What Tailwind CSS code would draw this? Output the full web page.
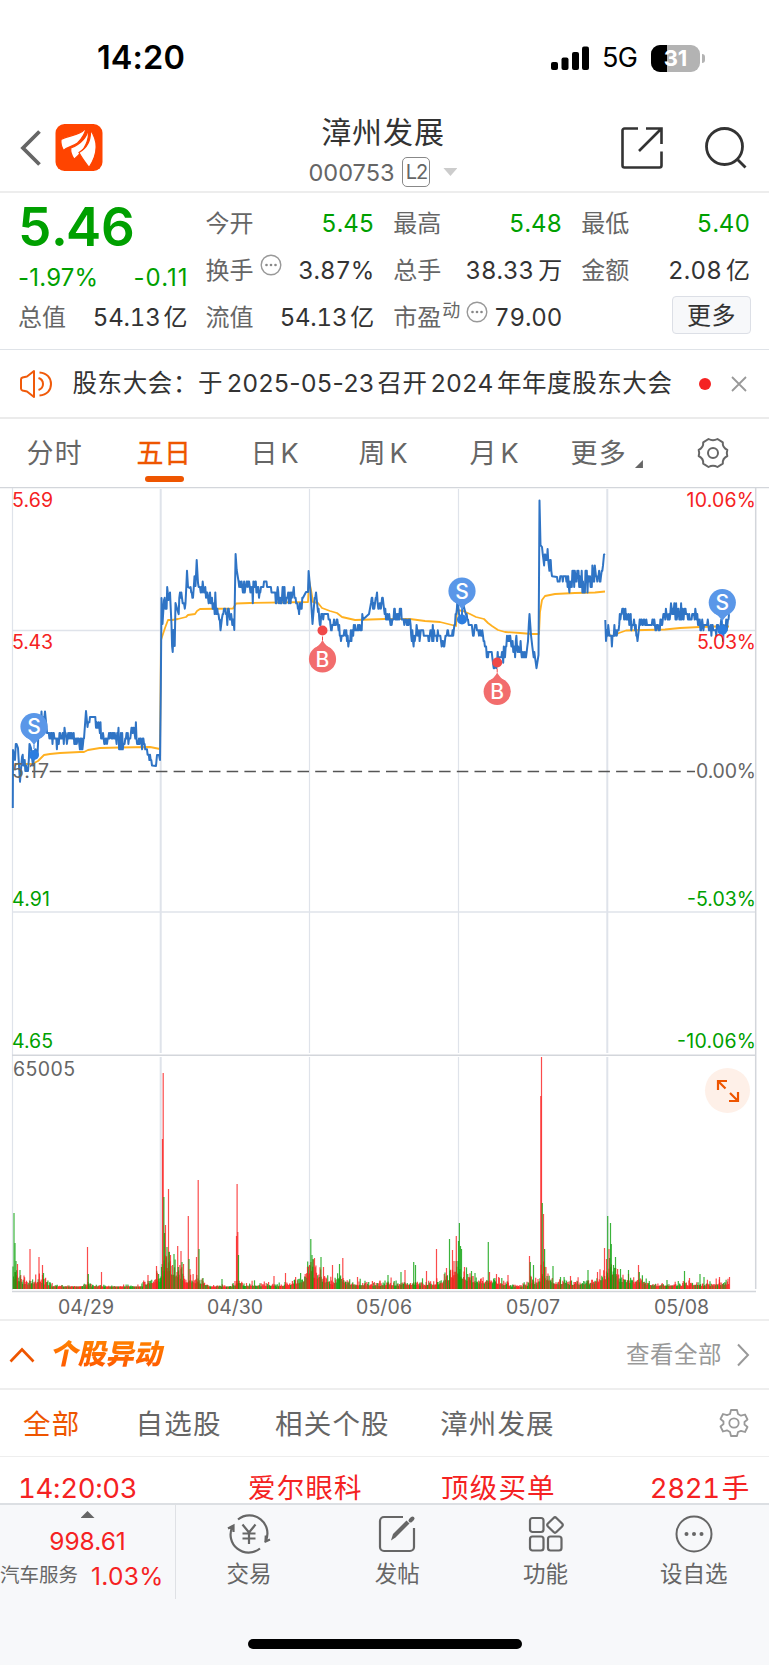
<!DOCTYPE html>
<html lang="zh-CN">
  <head>
    <meta charset="UTF-8" />
    <meta name="viewport" content="width=device-width, initial-scale=1.0" />
    <title>漳州发展 000753</title>
    <script src="https://cdn.jsdelivr.net/npm/@tailwindcss/browser@4"></script>
  </head>
  <body class="bg-white">
    <div class="relative w-[769px] h-[1665px] overflow-hidden bg-white font-['Inter','Noto_Sans_CJK_SC',sans-serif] text-[#333] whitespace-nowrap">
      <!-- Status bar -->
      <div class="h-[102px] pt-[14px] pl-[97px] pr-[64px] flex items-center justify-between text-black">
        <div class="text-[32.500px] font-semibold tracking-[0.1px]">14:20</div>
        <div class="flex items-center">
          <svg class="w-[38px] h-[26px]" viewBox="0 0 38 26">
            <rect x="0" y="17" width="7" height="8" rx="2" />
            <rect x="10.500" y="12.500" width="7" height="12.500" rx="2" />
            <rect x="21" y="7" width="7" height="18" rx="2" />
            <rect x="31" y="1.500" width="7" height="23.500" rx="2" />
          </svg>
          <div class="ml-[13px] w-[36px] text-[27px] tracking-[-0.7px]">5G</div>
          <div class="relative ml-[13px] w-[49px] h-[27px] rounded-[9px] overflow-hidden bg-[#b3b3b3] flex items-center justify-center">
            <div class="absolute left-0 top-0 w-[16px] h-full bg-black"></div>
            <div class="relative text-[22px] font-bold text-white leading-none">31</div>
          </div>
          <div class="ml-[2px] w-[3px] h-[9px] rounded-r-full bg-[#b3b3b3]"></div>
        </div>
      </div>

      <!-- Header -->
      <div class="h-[91px] border-b-2 border-[#ededed] flex justify-between pl-[20px] pr-[21px]">
        <div class="flex w-[280px] pt-[22px]">
          <svg class="w-[21px] h-[47px]" viewBox="0 0 21 47" fill="none" stroke="#666" stroke-width="3.800">
            <path d="M19.500 7.500 3 24 19.500 40.500" />
          </svg>
          <svg class="ml-[14px] w-[48px] h-[47px]" viewBox="0 0 48 47">
            <rect x=".500" width="47" height="47" rx="9" fill="#ff4400" />
            <g fill="#fff" stroke="#ff4400" stroke-width="1.200">
              <path d="M31 3.800C24 12.500 15 10.500 6 15.500c-.5 4 .5 7.500 2.500 11 4-4 10-4 14-7.500 4-4 7.500-8.500 8.500-15.200z" />
              <path d="M33.400 4.300C32 14 25.500 20 15.800 24c-.5 4 .7 7.500 3.400 11.300C28 28 35 18 33.400 4.300z" />
              <path d="M35.500 6C36 17 32 24 24 28.500c2.500 5 6 9.500 10 15C43 30 43.500 17.500 35.500 6z" />
            </g>
          </svg>
        </div>
        <div class="flex flex-col items-center pt-[10px]">
          <div class="h-[41px] leading-[41px] text-[30px] tracking-[0.9px]">漳州发展</div>
          <div class="h-[40px] flex items-center text-[#666]">
            <span class="mt-[1px] text-[23.500px]">000753</span>
            <span class="ml-[8px] w-[28px] h-[30px] rounded-[5px] border border-[#888] text-[20px] leading-[28px] text-center tracking-[-1px]">L2</span>
            <span class="ml-[13px] w-[14px] h-[8px] bg-[#ccc] [clip-path:polygon(0_0,100%_0,50%_100%)]"></span>
          </div>
        </div>
        <div class="flex justify-end w-[282px] pt-[24px]">
          <svg class="w-[44px] h-[44px]" viewBox="0 0 44 44" fill="none" stroke="#333" stroke-width="2.600">
            <path d="M18 2.500H4.500a2 2 0 0 0-2 2v35a2 2 0 0 0 2 2h35a2 2 0 0 0 2-2V25.500M26 2.500h15.500V18M41.500 2.500 19 25" />
          </svg>
          <svg class="ml-[40px] w-[44px] h-[44px]" viewBox="0 0 44 44" fill="none" stroke="#333" stroke-width="2.800">
            <circle cx="20.500" cy="20.500" r="18" />
            <path d="m33 33 8.500 8.500" />
          </svg>
        </div>
      </div>

      <!-- Quote -->
      <div class="h-[157px] border-b border-[#dfe3e8] pl-[18px] pr-[19px] flex gap-[18px] text-[24px] tabular-nums">
        <div class="w-[169.500px]">
          <div class="h-[66px] leading-[68px] text-[53px] font-semibold text-[#00a000]">5.46</div>
          <div class="h-[35px] leading-[37px] flex justify-between text-[#00a000] proportional-nums tracking-[0.2px]"><span>-1.97%</span><span class="tracking-[1px] -mr-[1px]">-0.11</span></div>
          <div class="h-[47px] leading-[48px] flex justify-between"><span class="text-[#666]">总值</span><span><span class="tracking-[-0.2px]">54.13</span><span class="ml-[3px]">亿</span></span></div>
        </div>
        <div class="flex-1 pt-[7px] grid grid-cols-3 gap-x-[19px] auto-rows-[47px] leading-[48px]">
          <div class="flex justify-between"><span class="text-[#666]">今开</span><span class="text-[#00a000]">5.45</span></div>
          <div class="flex justify-between"><span class="text-[#666]">最高</span><span class="text-[#00a000]">5.48</span></div>
          <div class="flex justify-between"><span class="text-[#666]">最低</span><span class="text-[#00a000]">5.40</span></div>
          <div class="flex justify-between">
            <span class="text-[#666] flex">换手
              <svg class="ml-[6px] mt-[7px] w-[22px] h-[22px]" viewBox="0 0 22 22" fill="#888">
                <circle cx="11" cy="11" r="9.800" fill="none" stroke="#999" stroke-width="1.400" />
                <circle cx="6.500" cy="11" r="1.300" /><circle cx="11" cy="11" r="1.300" /><circle cx="15.500" cy="11" r="1.300" />
              </svg>
            </span>
            <span class="tracking-[-0.1px]">3.87%</span>
          </div>
          <div class="flex justify-between"><span class="text-[#666]">总手</span><span>38.33<span class="ml-[4px]">万</span></span></div>
          <div class="flex justify-between"><span class="text-[#666]">金额</span><span><span class="tracking-[0.2px]">2.08</span><span class="ml-[4px]">亿</span></span></div>
          <div class="flex justify-between"><span class="text-[#666]">流值</span><span><span class="tracking-[-0.2px]">54.13</span><span class="ml-[3px]">亿</span></span></div>
          <div class="flex justify-between">
            <span class="text-[#666] flex">市盈<span class="text-[18px] leading-[34px] ml-[1px]">动</span>
              <svg class="ml-[6px] mt-[7px] w-[22px] h-[22px]" viewBox="0 0 22 22" fill="#888">
                <circle cx="11" cy="11" r="9.800" fill="none" stroke="#999" stroke-width="1.400" />
                <circle cx="6.500" cy="11" r="1.300" /><circle cx="11" cy="11" r="1.300" /><circle cx="15.500" cy="11" r="1.300" />
              </svg>
            </span>
            <span class="tracking-[-0.1px]">79.00</span>
          </div>
          <div class="flex justify-end">
            <div class="mt-[2px] -mr-[1px] w-[79px] h-[38px] rounded-[4px] border border-[#dcdfe6] bg-[#f7f8fa] text-center leading-[37px] tracking-[0.5px]">更多</div>
          </div>
        </div>
      </div>

      <!-- Notice -->
      <div class="h-[69px] border-b-2 border-[#ebebeb] flex items-center pl-[19px] pr-[21px]">
        <svg class="w-[34px] h-[30px]" viewBox="0 0 34 30" fill="none" stroke="#f05a0a" stroke-width="2">
          <path d="M2 10.500q0-1.500 1.500-2L8 7.500l7-5.500v26l-7-5.500-4.500-1q-1.500-.5-1.500-2z" stroke-linejoin="round" />
          <path d="M19.500 9q4.500 1.500 4.500 6t-4.500 6M20.500 3.500C28 4 32 9 32 15s-4 11-11.500 11.500" />
        </svg>
        <div class="ml-[19.500px] w-[614.500px] text-[24.500px] tracking-[0.6px]"><span>股东大会：于</span><span class="ml-[4px] tracking-[0.5px]">2025-05-23</span><span class="ml-[3px]">召开</span><span class="ml-[3px] tracking-[0.6px]">2024</span><span class="ml-[3px]">年年度股东大会</span></div>
        <div class="ml-[12px] w-[12px] h-[12px] rounded-full bg-[#f52222] shrink-0"></div>
        <svg class="ml-[20px] w-[16px] h-[16px] shrink-0" viewBox="0 0 16 16" stroke="#999" stroke-width="1.800">
          <path d="M1 1l14 14M15 1 1 15" />
        </svg>
      </div>

      <!-- Period tabs -->
      <div class="h-[68px] flex text-[27px] leading-[70px] text-[#666] pl-[26.500px]">
        <div class="w-[110px] tracking-[1.200px]">分时</div>
        <div class="relative w-[114px] text-[#ee5500] tracking-[0.5px] [-webkit-text-stroke:0.3px_#ee5500]">五日<div class="absolute left-[8.500px] bottom-[5px] w-[39px] h-[6px] rounded-full bg-[#ee5500]"></div></div>
        <div class="w-[108px]">日<span class="ml-[3px]">K</span></div>
        <div class="w-[111px]">周<span class="ml-[4px]">K</span></div>
        <div class="w-[101px]">月<span class="ml-[4px]">K</span></div>
        <div class="flex w-[126px] tracking-[1.200px]">更多<div class="ml-[8px] mt-[41px] w-[8px] h-[8px] bg-[#666] [clip-path:polygon(100%_0,100%_100%,0_100%)]"></div></div>
        <svg class="mt-[18px] w-[32px] h-[32px]" viewBox="0 0 32 32" fill="none" stroke="#666" stroke-width="2">
          <path d="M11.500 2q4.500 2.500 9 0l5.300 3.400q-.5 5 4.500 7.600-1 3 0 6-5 2.600-4.500 7.600L20.500 30q-4.500-2.500-9 0l-5.300-3.400q.5-5-4.500-7.600 1-3 0-6 5-2.600 4.500-7.600z" stroke-linejoin="round" />
          <circle cx="16" cy="16" r="5" />
        </svg>
      </div>

      <!-- Chart -->
      <div class="relative h-[834px] border-b-2 border-[#eee]">
        <svg class="block w-[769px] h-[832px]" viewBox="0 487 769 832" fill="none">
          <g stroke="#dfe3ea" stroke-width="1.200">
            <path d="M12.500 488V1290M309.500 489V1053M309.500 1057V1289M458.500 489V1053M458.500 1057V1289" />
            <path d="M160.700 489V1053M160.700 1057V1289M607.300 489V1053M607.300 1057V1289" stroke-width="2" />
            <path d="M12 630.500H756M12 912H756" stroke-width="1.600" />
            <path d="M0 487.500H769M12 1055.200H756M12 1291.500H756M755.700 488V1289" stroke="#d3d6db" stroke-width="1.500" />
          </g>
          <path d="M28 771.500H695" stroke="#555" stroke-width="1.300" stroke-dasharray="11.500 6.200" stroke-dashoffset="-4" />
          <g id="volume" stroke-width="1.200"></g>
          <path id="average" stroke="#ffb020" stroke-width="1.800" stroke-linejoin="round" />
          <path id="price" stroke="#2f74c5" stroke-width="2" stroke-linejoin="round" />
          <g id="markers" font-size="21" font-weight="500" text-anchor="middle" fill="#fff"></g>
          <g font-size="19.500">
            <g fill="#f52222">
              <text x="12" y="507" textLength="41">5.69</text>
              <text x="12" y="648.500" textLength="41">5.43</text>
              <text x="756" y="507" textLength="69.500" text-anchor="end">10.06%</text>
              <text x="756" y="648.500" textLength="59" text-anchor="end">5.03%</text>
            </g>
            <g fill="#666">
              <text x="12" y="777.500" textLength="37">5.17</text>
              <text x="756" y="777.500" textLength="60" text-anchor="end">0.00%</text>
              <text x="13" y="1076" textLength="62">65005</text>
              <text x="86" y="1313.500" textLength="56" text-anchor="middle">04/29</text>
              <text x="235" y="1313.500" textLength="56" text-anchor="middle">04/30</text>
              <text x="384" y="1313.500" textLength="56" text-anchor="middle">05/06</text>
              <text x="533" y="1313.500" textLength="54" text-anchor="middle">05/07</text>
              <text x="681.500" y="1313.500" textLength="55" text-anchor="middle">05/08</text>
            </g>
            <g fill="#00a000">
              <text x="12" y="906" textLength="38">4.91</text>
              <text x="12" y="1048" textLength="41">4.65</text>
              <text x="756" y="906" textLength="69" text-anchor="end">-5.03%</text>
              <text x="756" y="1048" textLength="79" text-anchor="end">-10.06%</text>
            </g>
          </g>
        </svg>
        <!-- expand button -->
        <div class="absolute left-[705px] top-[581px] w-[45px] h-[45px] rounded-full bg-[#fef0e8]">
          <svg class="w-[45px] h-[45px]" viewBox="0 0 45 45" fill="none" stroke="#ee5500" stroke-width="2.200">
            <path d="M13 22V13H22M13.500 13.500 20.500 20.500M33 24v9H24M32.500 32.500 25 25" />
          </svg>
        </div>
      </div>

      <!-- Unusual movements -->
      <div class="h-[69px] border-b-2 border-[#eee] flex items-center pl-[9px] pr-[19px]">
        <svg class="w-[26px] h-[16px]" viewBox="0 0 26 16" fill="none" stroke="#ee5500" stroke-width="2.600">
          <path d="M1.500 14.500 13 2.500 24.500 14.500" />
        </svg>
        <div class="ml-[17px] -mt-[2px] w-[116px] -skew-x-12 text-[28px] leading-[40px] font-black text-transparent bg-clip-text bg-gradient-to-b from-[#ff8a00] to-[#ff4c00]">个股异动</div>
        <div class="ml-auto mt-[1px] text-[23.500px] tracking-[0.5px] text-[#999]">查看全部</div>
        <svg class="ml-[14px] w-[14px] h-[24px]" viewBox="0 0 14 24" fill="none" stroke="#999" stroke-width="2">
          <path d="M2 1.500 12 12 2 22.500" />
        </svg>
      </div>
      <div class="h-[67px] border-b border-[#eee] flex items-center pl-[23px] pr-[20px] text-[27.500px] leading-[40px] tracking-[1.200px] text-[#666]">
        <div class="mt-[2px] w-[112.500px] text-[#ee5500]">全部</div>
        <div class="mt-[2px] w-[139.500px]">自选股</div>
        <div class="mt-[2px] w-[165px]">相关个股</div>
        <div class="mt-[2px]">漳州发展</div>
        <svg class="ml-auto w-[30px] h-[30px]" viewBox="0 0 30 30" fill="none" stroke="#999" stroke-width="1.800">
          <path d="M12 2h6l1 4 3 1.700 4-1.200 2.500 5-3 2.500v2.500l3 2.500-2.500 5-4-1.200L19 24l-1 4h-6l-1-4-3-1.700-4 1.200-2.500-5 3-2.500v-2.500l-3-2.500 2.500-5 4 1.200L11 6z" stroke-linejoin="round" />
          <circle cx="15" cy="15" r="4.700" />
        </svg>
      </div>
      <div class="h-[46px] flex pt-[17px] pl-[18px] pr-[20px] text-[27.500px] leading-[29px] text-[#f52222] tabular-nums">
        <div class="w-[230px] tracking-[-0.3px]">14:20:03</div>
        <div class="w-[193px] tracking-[1.200px]">爱尔眼科</div>
        <div class="tracking-[1.200px]">顶级买单</div>
        <div class="ml-auto tracking-[-0.3px]">2821<span class="ml-[2px]">手</span></div>
      </div>

      <!-- Bottom bar -->
      <div class="h-[162px] border-t-2 border-[#dcdfe3] bg-[#f7f8fa] text-[#666]">
        <div class="flex h-[94px]">
          <div class="w-[176px] border-r border-[#dfe1e5] flex flex-col items-center">
            <div class="mt-[6px] w-[14px] h-[7px] bg-[#666] [clip-path:polygon(50%_0,100%_100%,0_100%)]"></div>
            <div class="mt-[6px] h-[34px] leading-[35px] text-[24.500px] text-[#f52222]">998.61</div>
            <div class="w-full h-[36px] flex items-center"><span class="text-[19.500px]">汽车服务</span><span class="ml-[13px] text-[24.500px] text-[#f52222] tracking-[0.3px]">1.03%</span></div>
          </div>
          <div class="flex-1 -ml-[1px] mr-[1px] grid grid-cols-4 text-[22.500px] leading-[38px]">
            <div class="flex flex-col items-center pt-[8px]">
              <svg class="w-[44px] h-[42px]" viewBox="0 0 44 42" fill="none" stroke="#666" stroke-width="2.200">
                <path d="M11 6.500A18 18 0 0 1 38.500 28.500M38.500 28.500l.3-6M37.500 29l5.500-2.500M33 35.500A18 18 0 0 1 5.500 13.500M1 15.500 6.500 12.500V19M15.500 11.500 22 19.500 28.500 11.500M22 19.500V31M15.500 20.500h13M15.500 25.500h13" />
              </svg>
              <div>交易</div>
            </div>
            <div class="flex flex-col items-center pt-[8px]">
              <svg class="w-[44px] h-[42px]" viewBox="0 0 44 42" fill="none" stroke="#666" stroke-width="2.200">
                <path d="M28 4H9a4 4 0 0 0-4 4v26a4 4 0 0 0 4 4h26a4 4 0 0 0 4-4V15" />
                <path d="M16 27.500 18 21 31.500 7.500 34.500 10.500 20.500 24.500Z" fill="#666" stroke="none" />
                <path d="M35.500 7.500 37.500 5.500" stroke-width="4" stroke-linecap="round" />
              </svg>
              <div>发帖</div>
            </div>
            <div class="flex flex-col items-center pt-[8px]">
              <svg class="w-[44px] h-[42px]" viewBox="0 0 44 42" fill="none" stroke="#666" stroke-width="2.200">
                <rect x="6" y="5" width="13.500" height="14" rx="2.500" />
                <rect x="6" y="23.500" width="13.500" height="14" rx="2.500" />
                <rect x="24" y="23.500" width="13.500" height="14" rx="2.500" />
                <rect x="25" y="6" width="12" height="12" rx="2" transform="rotate(45 31 12)" />
              </svg>
              <div>功能</div>
            </div>
            <div class="flex flex-col items-center pt-[8px]">
              <svg class="w-[44px] h-[42px]" viewBox="0 0 44 42" fill="#666">
                <circle cx="22" cy="21" r="17.500" fill="none" stroke="#666" stroke-width="2" />
                <circle cx="14.500" cy="21" r="2" /><circle cx="22" cy="21" r="2" /><circle cx="29.500" cy="21" r="2" />
              </svg>
              <div>设自选</div>
            </div>
          </div>
        </div>
        <div class="mt-[40px] mx-auto w-[274px] h-[10px] rounded-full bg-black"></div>
      </div>
    </div>

    <script>
      // repeatable noise in 0..1
      let seed = 7;
      const rand = () => {
        seed = (seed * 16807) % 2147483647;
        return seed / 2147483647;
      };

      // [x, y, wobble] for each trading run
      const runs = [
        [
          [12.8,808,0],[13,750,0],[15,760,6],[16.500,744,0],[18,748,2],[20,782,0],[22,757,5],[26,768,6],[28,770,3],[29.500,745,0],[31,748,3],[33,765,0],[35,750,3],[37.500,757,2],[38.500,730,6],[41.500,712,0],[42.500,733,3],[45,710,0],[46.500,727,6],[50,733,5],[55,741,6],[62,737,6],[70,738,6],[78,739,6],[83,746,3],[84,738,0],[86,711,0],[87.500,727,3],[90,717,2],[94,718,5],[98,727,6],[103,734,4],[107,744,3],[111,734,3],[116,738,7],[124,742,5],[129,738,3],[134,730,6],[139,738,5],[144,743,5],[147,751,4],[150,757,3],[152,766,0],[156,766,0],[157,755,0],[159,755,0],[160,760,0],[160.800,690,0],
          [161.500,598,0],[162.500,624,0],[164,600,5],[166,605,7],[167.200,587,0],[168.500,600,5],[170,594,0],[171.500,625,5],[172.700,652,0],[173.500,630,0],[174.700,646,0],[175.500,603,0],[178,612,5],[180,594,5],[184,603,3],[185.500,604,3],[187,571,0],[188,587,0],[190,588,4],[193,598,5],[194.500,577,0],[195.500,586,0],[196.700,560,0],[198,583,3],[200,586,5],[204,592,6],[208,600,5],[212,597,7],[216,606,6],[218.500,612,3],[220.500,630,0],[222,618,4],[226,614,6],[230,619,3],[233.500,619,0],[234.300,630,0],[235.600,554,0],[236.700,570,0],[238,578,5],[241,589,4],[246,587,6],[251,589,7],[257,593,6],[261,588,4],[264,580,5],[269,587,3],[274,591,7],[282,596,8],[290,594,7],[295,597,3],[298.500,608,4],[301,608,2],[303,598,0],[306,592,0],[308,592,0],[308.600,571,0],
          [310.500,592,0],[312.500,624,0],[314,606,5],[316,594,0],[318,612,5],[320.500,624,3],[322,614,2],[328,615,3],[330.500,626,4],[334,621,4],[338,626,5],[341,640,4],[345,630,5],[349,643,5],[352,632,4],[355,626,3],[361,628,4],[363,618,0],[369,614,0],[371,603,3],[375,602,7],[379,607,6],[384,608,6],[388,617,6],[396,615,7],[403,621,3],[410,622,5],[413,642,4],[416,634,5],[422,633,4],[428,634,7],[434,631,4],[439,638,4],[443,643,5],[448,632,4],[452,636,4],[455,624,3],[457.500,600,0],
          [459,614,0],[461,622,4],[463,603,0],[466,615,6],[470,625,4],[473,636,4],[475,624,4],[479,635,4],[483,636,3],[485.500,648,4],[488,656,5],[491,654,7],[495,664,6],[499,658,3],[502,652,5],[505,656,2],[507,638,4],[509,637,6],[512,645,7],[517,647,6],[523,652,5],[526,657,3],[528,640,3],[529.500,614,0],[531,635,3],[533,650,4],[535,655,3],[536.500,668,0],[538.500,655,2],[539.500,501,0],
          [540.500,545,0],[542,547,6],[543.500,562,8],[547,560,8],[550,562,4],[552,576,0],[557,577,2],[559,584,6],[564,577,4],[567,575,6],[570,584,7],[576,579,8],[583,583,8],[590,578,8],[596,577,4],[601,576,2],[603,566,2],[604,554,0],[605,554,0],
        ],
        [
          [605.300,620,0],[606,641,0],[607,630,6],[610,636,6],[615,634,3],[618,628,4],[621,616,3],[623.500,608,7],[626,618,4],[630,621,6],[634,620,4],[637.500,640,0],[639,628,4],[643,625,5],[647,625,1],[653,622,4],[658,627,5],[661,620,4],[664,613,5],[669,615,6],[673,611,6],[678,609,8],[683,614,6],[688,619,2],[694,616,7],[698,623,4],[704,627,5],[709,630,4],[715,630,4],[720,630,6],[725,630,6],[728,622,2],[729,614,0],
        ],
      ];

      // one cent is 5.41px; wobbling stretches snap to whole cents
      const tick = (y) => 630.300 + Math.round((y - 630.300) / 5.410) * 5.410;
      const trace = (points) => {
        let d = `M${points[0][0]} ${points[0][1]}`;
        for (let i = 1; i < points.length; i++) {
          const [x0, y0, w] = points[i - 1];
          const [x1, y1] = points[i];
          const steps = w ? Math.max(1, Math.round((x1 - x0) / 0.62)) : 1;
          for (let s = 1; s < steps; s++) {
            const t = s / steps;
            const y = tick(y0 + (y1 - y0) * t + (rand() * 2 - 1) * w * 1.5);
            d += `L${(x0 + (x1 - x0) * t).toFixed(1)} ${y.toFixed(1)}`;
          }
          d += `L${x1} ${w ? tick(y1).toFixed(1) : y1}`;
        }
        return d;
      };
      document.getElementById("price").setAttribute("d", runs.map(trace).join(""));

      document.getElementById("average").setAttribute(
        "d",
        "M13 766L17 764 32 764 38 761 44 755 50 754 60 753 80 752 84 752 88 750 100 748 120 747.500 150 747 160 749L161 640 163 634 165 628 168 620 172 620 178 619 186 617 188 615 195 614 197 611 200 609 233 608.500 236 603.500 250 603 308 602L309 580 311 590 313 602 318 603 322 608 330 611 337 613 342 617 355 620 370 619.500 385 619 410 619 425 621 440 622 452 625 456 626 457 610 463 611 470 614 476 617 484 619 488 623 492 626 498 630 505 632 520 633 532 634 539 634L540 612 542 600 545 596 555 594 575 593 595 592.500 605 591.500" +
          "M606 634L613 636 619 633 626 630.500 645 630 665 629.500 680 628 700 627 715 626.500 729 626.500"
      );

      // typical bar height along the time axis
      const base = [
        [13,26],[17,22],[24,13],[32,12],[40,18],[46,11],[56,5],[80,4],[88,7],[92,6],[105,4],[140,5],[148,12],[158,19],[161,22],[166,48],[172,32],[178,28],[184,17],[190,18],[198,14],[204,12],[208,5],[230,4],[238,12],[244,8],[255,8],[280,7],[295,13],[304,20],[309,32],[314,30],[320,25],[324,16],[332,11],[340,24],[346,13],[354,10],[365,9],[380,8],[388,12],[398,8],[410,11],[420,10],[430,9],[440,13],[450,25],[458,35],[464,26],[470,20],[480,14],[495,17],[504,9],[518,5],[527,8],[532,14],[538,11],[544,34],[548,18],[556,13],[575,11],[595,14],[604,24],[612,34],[618,21],[630,17],[645,12],[656,8],[690,9],[710,8],[729,12],
      ];
      const R = "#fa1e1e";
      const G = "#0aa00a";
      // single tall bars: [x, height, colour]
      const spikes = [
        [14,76,G],[15,46,G],[16,28,G],[17.500,25,R],[20,19,G],[30,40,R],[39,32,R],[42.500,24,R],[43.500,16,G],[87.500,42,R],[88.300,15,G],[101.500,17,R],[148,14,R],[156.500,23,R],[161.500,22,G],[162.500,150,R],[163.200,216,R],[163.900,92,G],[164.600,56,G],[165.500,64,R],[167,42,G],[168.500,100,R],[169.200,37,G],[170.500,34,R],[174,35,G],[177.700,43,R],[178.300,22,G],[181,38,R],[182,27,G],[183.500,25,R],[188.300,73,R],[189,30,G],[190,20,R],[196.500,32,R],[198.200,109,R],[199,40,G],[203,11,G],[222,10,G],[236.500,53,R],[237.100,105,R],[237.800,57,R],[238.500,34,G],[274,13,R],[285.500,16,R],[307.500,22,R],[309.500,24,R],[310.800,50,G],[312,34,G],[313,30,G],[314.500,31,R],[321,32,G],[323.500,22,R],[332.500,24,R],[339.500,25,G],[342.800,31,R],[357.500,12,R],[388,14,G],[401,17,G],[405,19,R],[413.700,27,G],[415.500,24,G],[426.500,18,R],[436.500,40,R],[446.500,21,R],[449.500,50,G],[452.500,39,R],[454,28,R],[456.300,53,R],[458.500,48,G],[459.400,66,G],[460.500,43,G],[461.500,40,G],[464.500,22,R],[471.500,18,G],[475,16,G],[488.300,47,G],[489.500,17,R],[496.500,15,R],[508,14,R],[529.500,33,R],[530.300,27,G],[533.500,24,G],[540.800,193,R],[541.500,232,R],[542.300,86,G],[543.500,75,R],[544.600,40,G],[553,23,G],[560.500,12,G],[570.500,13,R],[588,19,G],[597.500,17,R],[604.500,41,R],[606.500,30,R],[607.700,73,G],[609,40,R],[610.500,66,G],[611.300,45,G],[613.500,24,G],[615.500,32,G],[620.500,20,G],[628.500,19,G],[638.500,24,R],[639.300,17,G],[667,9,G],[684.500,18,G],[689.500,11,R],[700,15,G],[704,12,G],[719.500,12,R],[729.500,12,R],
      ];
      const bars = [];
      for (let i = 1; i < base.length; i++) {
        const [x0, h0] = base[i - 1];
        const [x1, h1] = base[i];
        for (let x = x0; x < x1; x += 0.62) {
          const h = (h0 + ((h1 - h0) * (x - x0)) / (x1 - x0)) * (0.35 + 0.8 * rand() * rand());
          bars.push([x, Math.max(2.5, h), rand() > 0.42 ? R : G]);
        }
      }
      document.getElementById("volume").innerHTML = bars
        .concat(spikes)
        .map(([x, h, c]) => `<path d="M${x.toFixed(1)} 1289v-${h.toFixed(1)}" stroke="${c}" stroke-opacity=".8"/>`)
        .join("");

      // buy / sell pins: [label, x, circle y, dot y]
      const pins = [
        ["S", 34, 726.500, 755],
        ["B", 322.500, 659, 630.500],
        ["S", 462, 591, 619.500],
        ["B", 497.200, 691.500, 662.500],
        ["S", 722.300, 602.500, 630],
      ];
      document.getElementById("markers").innerHTML = pins
        .map(([label, x, cy, dy]) => {
          const sell = label === "S";
          const c = sell ? "#5a97e8" : "#f26d6d";
          const dot = sell ? "#2b7de0" : "#f04848";
          const k = sell ? 1 : -1;
          return `<path d="M${x} ${dy}V${cy}" stroke="${dot}" stroke-dasharray="4 2"/>
            <circle cx="${x}" cy="${dy}" r="5" fill="${dot}"/>
            <path d="M${x - 9} ${cy + 10 * k}Q${x - 3} ${cy + 13 * k} ${x} ${cy + 19 * k}Q${x + 3} ${cy + 13 * k} ${x + 9} ${cy + 10 * k}Z" fill="${c}"/>
            <circle cx="${x}" cy="${cy}" r="13.600" fill="${c}"/>
            <text x="${x}" y="${cy + 7.600}">${label}</text>`;
        })
        .join("");
    </script>
  </body>
</html>
